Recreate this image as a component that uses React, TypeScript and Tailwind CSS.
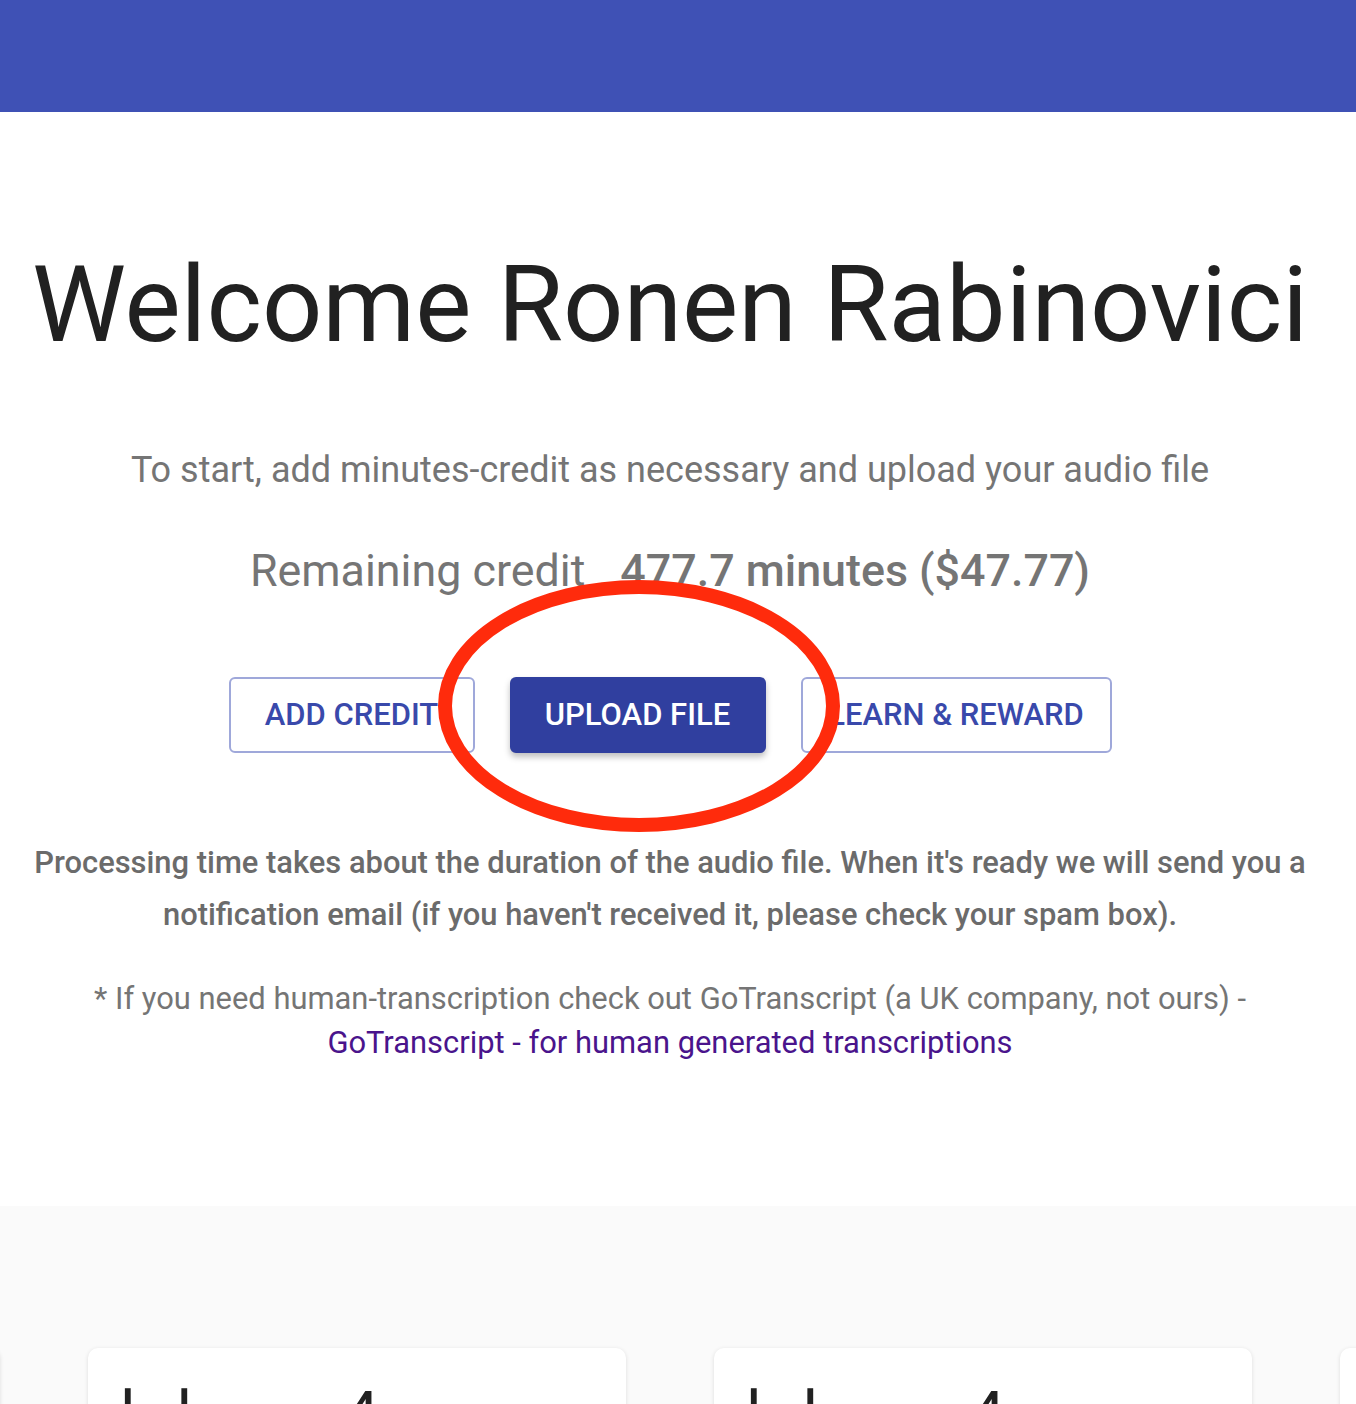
import React from "react";

const font = { fontFamily: "Roboto, 'Noto Sans', sans-serif" };

function Card({ children }: { children?: React.ReactNode }) {
  return (
    <div className="w-[538px] h-[200px] shrink-0 rounded-[10px] bg-white shadow-[0_1px_4px_rgba(0,0,0,0.12)] px-[32px] pt-[36px]">
      {children}
    </div>
  );
}

function CardHead() {
  return (
    <div className="text-[64px] leading-none text-[#212121]">
      <span>l</span>
      <span className="ml-[41px]">l</span>
      <span className="ml-[151px]">4</span>
    </div>
  );
}

export default function App() {
  return (
    <div className="relative w-[1356px] h-[1404px] overflow-hidden bg-white" style={font}>
      {/* top bar */}
      <div className="h-[112px] bg-[#3f51b5]" />

      {/* welcome block */}
      <section className="flex flex-col items-center text-center pt-[130px] pb-[141px] pr-[16px]">
        <h1 className="text-[106px] leading-[127px] font-normal text-[#212121]">
          Welcome Ronen Rabinovici
        </h1>

        <p className="mt-[77px] text-[36px] leading-[48px] text-[#757575]">
          To start, add minutes-credit as necessary and upload your audio file
        </p>

        <p className="mt-[50px] text-[44.8px] leading-[53px] text-[#757575]">
          Remaining credit
          <span className="ml-[35px] font-medium">477.7 minutes ($47.77)</span>
        </p>

        <div className="mt-[80px] flex gap-[35px]">
          <button className="h-[76px] w-[246px] rounded-[6px] border-2 border-[#9fa8da] text-[31px] font-medium text-[#3949ab] uppercase">
            Add credit
          </button>
          <button className="h-[76px] w-[256px] rounded-[6px] bg-[#303f9f] text-[31px] font-medium text-white uppercase shadow-[0_4px_6px_rgba(0,0,0,0.25)]">
            Upload file
          </button>
          <button className="h-[76px] w-[311px] rounded-[6px] border-2 border-[#9fa8da] text-[31px] font-medium text-[#3949ab] uppercase">
            Learn &amp; reward
          </button>
        </div>

        <p className="mt-[84px] w-[1320px] text-[30.9px] leading-[52px] font-medium text-[#6b6b6b]">
          Processing time takes about the duration of the audio file. When it's ready we will send you a
          notification email (if you haven't received it, please check your spam box).
        </p>

        <p className="mt-[36px] text-[30.9px] leading-[44px] text-[#757575]">
          * If you need human-transcription check out GoTranscript (a UK company, not ours) -
          <br />
          <a className="text-[#4a148c]">GoTranscript - for human generated transcriptions</a>
        </p>
      </section>

      {/* cards strip */}
      <section className="bg-[#fafafa] h-[400px] pt-[142px] overflow-hidden">
        <div className="flex gap-[88px] ml-[-538px]">
          <Card />
          <Card>
            <CardHead />
          </Card>
          <Card>
            <CardHead />
          </Card>
          <Card />
        </div>
      </section>

      {/* annotation ring */}
      <svg
        className="absolute left-[430px] top-[572px] pointer-events-none"
        width="420"
        height="270"
        viewBox="0 0 420 270"
      >
        <ellipse cx="209" cy="134" rx="194" ry="119" fill="none" stroke="#ff2b0c" strokeWidth="14" />
      </svg>
    </div>
  );
}
